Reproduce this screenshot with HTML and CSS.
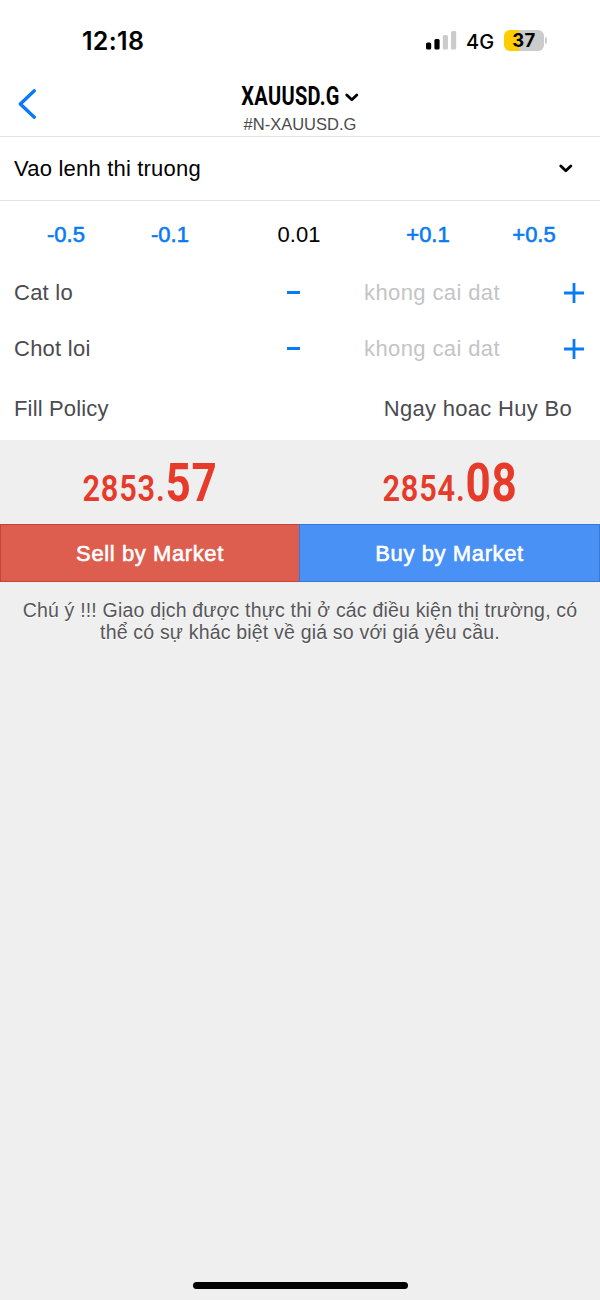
FILE: index.html
```html
<!DOCTYPE html>
<html lang="vi">
<head>
<meta charset="utf-8">
<title>XAUUSD.G</title>
<link rel="stylesheet" href="styles.css">
</head>
<body>
<div class="screen">
  <div class="status">
    <span class="clock">12:18</span>
    <span class="indicators">
      <svg class="signal" width="32" height="20" viewBox="0 0 32 20"><rect x="0" y="12.4" width="5.2" height="7.2" rx="1.5"/><rect x="8.4" y="9" width="5.2" height="10.6" rx="1.5"/><rect class="dim" x="16.8" y="5" width="5.2" height="14.6" rx="1.5"/><rect class="dim" x="25" y="1" width="5.2" height="18.6" rx="1.5"/></svg>
      <span class="network">4G</span>
      <span class="battery">37</span>
      <span class="nub"></span>
    </span>
  </div>
  <header class="nav">
    <svg class="back" width="20" height="32" viewBox="0 0 20 32"><path d="M16.3 2.8 2.3 16l14 13.2"/></svg>
    <div class="heading">
      <div class="symbol"><span class="symbol-name"><span class="narrow">XAUUSD.G</span></span><svg class="chevron" width="14" height="10" viewBox="0 0 14 10"><path d="m1.8 2 5 4.8L11.8 2"/></svg></div>
      <div class="subtitle">#N-XAUUSD.G</div>
    </div>
  </header>
  <div class="order-type"><span>Vao lenh thi truong</span><svg class="chevron" width="14" height="10" viewBox="0 0 14 10"><path d="m1.8 2 5 4.8L11.8 2"/></svg></div>
  <div class="volume">
    <span class="step">-0.5</span><span class="step">-0.1</span><span class="lots">0.01</span><span class="step">+0.1</span><span class="step">+0.5</span>
  </div>
  <div class="row">
    <span class="label">Cat lo</span>
    <i class="minus"></i><span class="empty">khong cai dat</span>
    <svg class="plus" width="20" height="20" viewBox="0 0 20 20"><path d="M0 10h20M10 0v20"/></svg>
  </div>
  <div class="row">
    <span class="label">Chot loi</span>
    <i class="minus"></i><span class="empty">khong cai dat</span>
    <svg class="plus" width="20" height="20" viewBox="0 0 20 20"><path d="M0 10h20M10 0v20"/></svg>
  </div>
  <div class="policy"><span>Fill Policy</span><span>Ngay hoac Huy Bo</span></div>
  <main class="trade">
    <div class="prices">
      <div class="price">2853.<b>57</b></div>
      <div class="price">2854.<b>08</b></div>
    </div>
    <div class="actions">
      <div class="action sell">Sell by Market</div>
      <div class="action buy">Buy by Market</div>
    </div>
    <p class="note">Chú ý !!! Giao dịch được thực thi ở các điều kiện thị trường, có<br>thể có sự khác biệt về giá so với giá yêu cầu.</p>
    <div class="home"></div>
  </main>
</div>
</body>
</html>
```
FILE: styles.css
```css
* { box-sizing: border-box; }
body { margin: 0; }
.screen {
  width: 600px; height: 1300px; display: flex; flex-direction: column;
  background: #fff; color: #000; overflow: hidden;
  font-family: "Liberation Sans", Arial, sans-serif; font-size: 22px; line-height: 26px;
}
.status { height: 80px; display: flex; justify-content: space-between; padding: 26px 53px 0 82px; }
.clock { font: 600 25px/30px Inter, sans-serif; letter-spacing: .3px; }
.indicators { display: flex; align-items: center; height: 28px; }
.signal { margin-right: 8px; }
.dim { fill: #cbcbcb; }
.network { font: 500 20px/24px Inter, sans-serif; width: 30px; margin-right: 8px; padding-top: 3px; }
.battery {
  width: 40px; height: 21px; border-radius: 6px; text-align: center;
  background: linear-gradient(90deg, #ffcc02 38%, #cbcbcb 38%);
  font: 700 18.5px/21px Inter, sans-serif; letter-spacing: .3px;
}
.nub { width: 2px; height: 7px; margin-left: 1px; border-radius: 0 3px 3px 0; background: #cbcbcb; }
.nav { height: 57px; display: grid; grid-template-columns: 18px 20px 1fr 38px; border-bottom: 1px solid #e2e2e2; }
.back { grid-column: 2; margin-top: 8px; fill: none; stroke: #087bf5; stroke-width: 3.4; stroke-linecap: round; stroke-linejoin: round; }
.heading { display: flex; flex-direction: column; align-items: center; }
.symbol { display: flex; align-items: center; height: 32px; padding-top: 2px; gap: 4px; }
.symbol .chevron { margin-top: 1px; }
.symbol-name { width: 99px; display: flex; justify-content: center; }
.narrow { font: 700 25px/32px Roboto, sans-serif; letter-spacing: .4px; transform: scaleX(.8); }
.chevron { fill: none; stroke: #000; stroke-width: 2.8; stroke-linecap: round; stroke-linejoin: round; }
.subtitle { font-size: 16.5px; line-height: 20px; margin-top: 2px; color: #4b4b4d; }
.order-type { height: 64px; display: flex; align-items: center; justify-content: space-between; padding: 0 27px 0 14px; border-bottom: 1px solid #e2e2e2; letter-spacing: .2px; }
.volume { height: 64px; display: grid; grid-template-columns: 104px 104px 154px 104px 108px; padding: 0 14px; align-items: center; text-align: center; padding-top: 3px; }
.step { color: #087bf5; -webkit-text-stroke: .6px #087bf5; }
.row { height: 56px; display: grid; grid-template-columns: 273px 13px 264px 20px; padding: 0 14px; align-items: center; color: #4b4b4f; }
.label { letter-spacing: .25px; }
.minus { height: 3px; margin-bottom: 2px; background: #087bf5; }
.empty { text-align: center; color: #c4c4c6; letter-spacing: .38px; }
.plus { fill: none; stroke: #087bf5; stroke-width: 2.8; }
.policy { height: 63px; display: flex; justify-content: space-between; align-items: center; padding: 1px 28px 0 14px; color: #4b4b4f; letter-spacing: .15px; }
.policy span:last-child { letter-spacing: .3px; }
.trade { flex: 1; display: flex; flex-direction: column; background: #efefef; }
.prices { height: 84px; display: grid; grid-template-columns: 1fr 1fr; }
.price { display: flex; justify-content: center; align-items: baseline; padding-top: 1px; font: 600 37px/84px Roboto, sans-serif; letter-spacing: 1px; color: #e63a2a; transform: scaleX(.83); }
.price b { font-size: 53px; font-weight: 700; }
.actions { height: 58px; display: grid; grid-template-columns: 299px 301px; }
.action { display: flex; align-items: center; justify-content: center; padding-top: 2px; color: #fff; -webkit-text-stroke: .6px #fff; letter-spacing: .6px; }
.sell { background: #dd5d4e; border: 1px solid #c64435; border-right: 0; }
.buy { background: #4a91f5; border: 1px solid #3778d4; }
.note { margin: 17px 0 0; text-align: center; font-size: 19.5px; line-height: 22px; letter-spacing: .19px; color: #57575a; text-shadow: 0 1px #fff; white-space: nowrap; }
.home { width: 215px; height: 7px; margin: auto auto 11px; border-radius: 4px; background: #000; }
```
